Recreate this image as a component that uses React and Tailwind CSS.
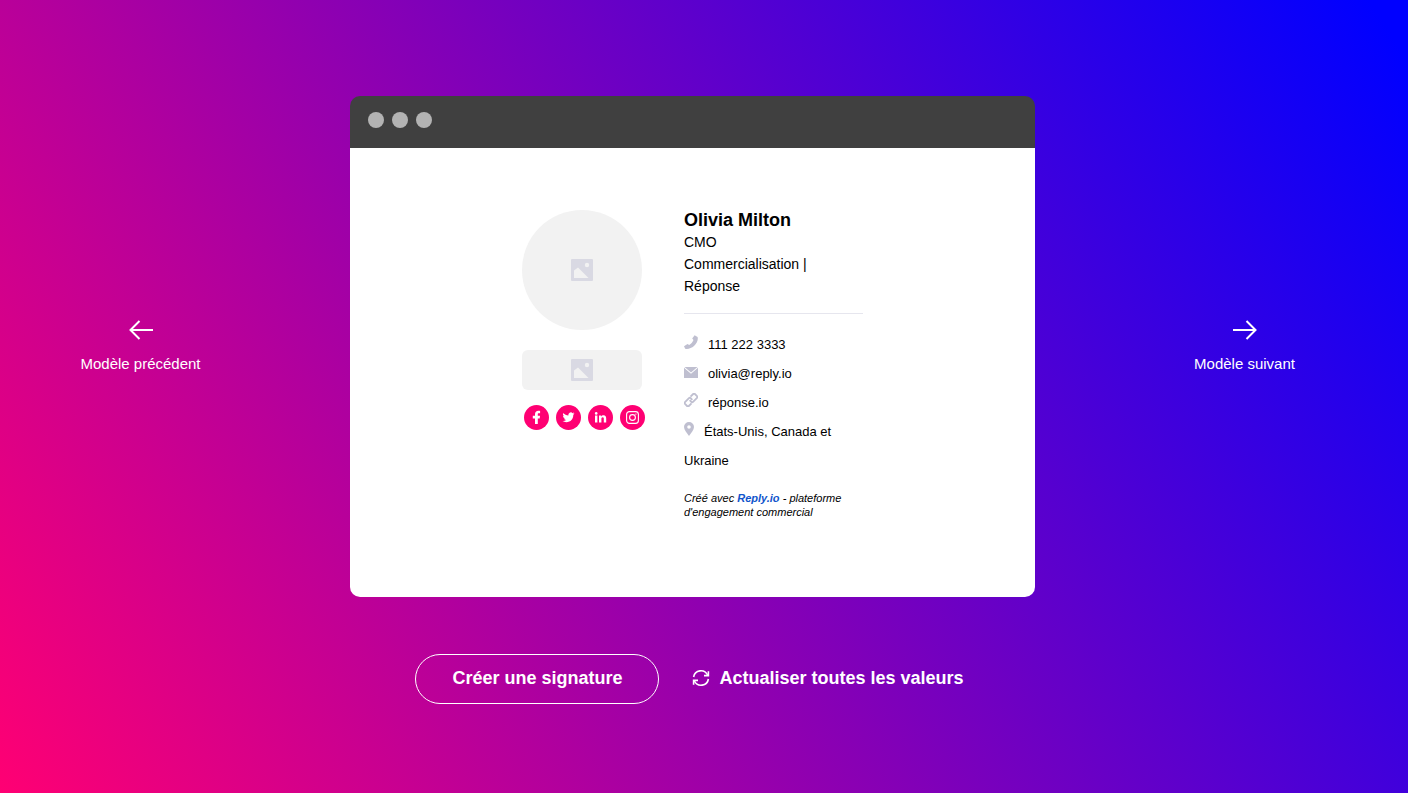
/**
 * Signature template picker
 * Preview window with previous / next navigation and actions
 */

function ImageIcon() {
  return (
    <svg width="22" height="22" viewBox="0 0 22 22" aria-hidden="true">
      <rect width="22" height="22" rx="1" fill="#d9d9e3" />
      <path d="M3 19V11.5L7 8.5L17.5 19Z" fill="#f2f2f2" />
      <circle cx="16" cy="6" r="2.2" fill="#f2f2f2" />
    </svg>
  );
}

function ArrowIcon({ flipped }) {
  return (
    <svg
      width="24"
      height="20"
      viewBox="0 0 24 20"
      fill="none"
      stroke="currentColor"
      strokeWidth="2"
      aria-hidden="true"
    >
      {flipped ? (
        <path d="M0 10H22.5M13.5 1L22.5 10L13.5 19" />
      ) : (
        <path d="M24 10H1.5M10.5 1L1.5 10L10.5 19" />
      )}
    </svg>
  );
}

function RefreshIcon() {
  return (
    <svg
      width="18"
      height="18"
      viewBox="0 0 18 18"
      fill="none"
      stroke="currentColor"
      strokeWidth="1.6"
      aria-hidden="true"
    >
      <path d="M1.6 8A7.4 7.4 0 0 1 15.6 6M16.4 10A7.4 7.4 0 0 1 2.4 12" />
      <path d="M16.4 2.2V6.6H12M1.6 15.8V11.4H6" />
    </svg>
  );
}

const contactIcons = {
  phone: (
    <svg className="mr-[10px] inline-block align-baseline" width="14" height="14" viewBox="0 0 14 14" fill="#bfbfd0" aria-hidden="true">
      <path d="M10.6 0.2L13.6 2C14.4 5 12.8 8.6 10 11C7.5 13.2 4 14.4 1.2 13.7L0 11.2L3.5 8.9L5.2 9.9C7 9 8.6 7.4 9.5 5.1L8.2 3.6Z" />
    </svg>
  ),
  mail: (
    <svg className="mr-[10px] inline-block align-baseline" width="14" height="12" viewBox="0 0 14 12" fill="#bfbfd0" aria-hidden="true">
      <path d="M0.5 1H13.5L7 6.4Z" />
      <path d="M0 1.8L7 7.7L14 1.8V12H0Z" />
    </svg>
  ),
  link: (
    <svg
      className="mr-[10px] inline-block align-baseline"
      width="14"
      height="14"
      viewBox="0 0 14 14"
      fill="none"
      stroke="#bfbfd0"
      strokeWidth="1.8"
      aria-hidden="true"
    >
      <g transform="translate(7 7) rotate(-45)">
        <path d="M-2 2.7H-5.8A1.2 1.2 0 0 1 -7 1.5V-1.5A1.2 1.2 0 0 1 -5.8 -2.7H-0.2A1.2 1.2 0 0 1 1 -1.5V0.9" />
        <path d="M2 -2.7H5.8A1.2 1.2 0 0 1 7 -1.5V1.5A1.2 1.2 0 0 1 5.8 2.7H0.2A1.2 1.2 0 0 1 -1 1.5V-0.9" />
      </g>
    </svg>
  ),
  pin: (
    <svg className="mr-[10px] inline-block align-baseline" width="10" height="14" viewBox="0 0 10 14" fill="#bfbfd0" aria-hidden="true">
      <path
        fillRule="evenodd"
        d="M5 0A5 5 0 0 1 10 5C10 8.2 7 10.8 5 14C3 10.8 0 8.2 0 5A5 5 0 0 1 5 0ZM5 3.2A1.8 1.8 0 1 0 5 6.8A1.8 1.8 0 1 0 5 3.2Z"
      />
    </svg>
  ),
};

const contacts = [
  { icon: 'phone', text: '111 222 3333' },
  { icon: 'mail', text: 'olivia@reply.io' },
  { icon: 'link', text: 'réponse.io' },
  { icon: 'pin', text: 'États-Unis, Canada et Ukraine' },
];

const socials = [
  {
    name: 'Facebook',
    shape: (
      <path
        fill="#fff"
        d="M11 19V13.4H8.8V10.8H11V9.2C11 7 12.3 5.8 14.4 5.8C15.2 5.8 15.9 5.9 16.1 5.9V8.2H14.9C13.9 8.2 13.8 8.6 13.8 9.3V10.8H16L15.7 13.4H13.8V19Z"
      />
    ),
  },
  {
    name: 'Twitter',
    shape: (
      <path
        fill="#fff"
        transform="translate(6.5 6.3) scale(0.5)"
        d="M23.95 4.57a10 10 0 0 1-2.82.77 4.96 4.96 0 0 0 2.16-2.72c-.95.56-2 .96-3.13 1.18a4.92 4.92 0 0 0-8.38 4.48C7.69 8.1 4.07 6.13 1.64 3.16a4.92 4.92 0 0 0 1.52 6.57 4.9 4.9 0 0 1-2.23-.61v.06a4.92 4.92 0 0 0 3.95 4.83 5 5 0 0 1-2.21.08 4.94 4.94 0 0 0 4.6 3.42A9.87 9.87 0 0 1 0 19.54a13.99 13.99 0 0 0 7.55 2.21c9.05 0 14-7.5 14-13.98 0-.21 0-.42-.02-.63a9.94 9.94 0 0 0 2.46-2.55z"
      />
    ),
  },
  {
    name: 'LinkedIn',
    shape: (
      <g fill="#fff">
        <circle cx="8.2" cy="8.4" r="1.3" />
        <path d="M7 10.4H9.4V17.6H7ZM11 10.4H13.2V11.4C13.6 10.7 14.5 10.2 15.5 10.2C17.6 10.2 18.2 11.6 18.2 13.5V17.6H15.8V14C15.8 13 15.7 12.2 14.7 12.2C13.7 12.2 13.4 13 13.4 14V17.6H11Z" />
      </g>
    ),
  },
  {
    name: 'Instagram',
    shape: (
      <g fill="none" stroke="#fff" strokeWidth="1.1">
        <rect x="6.6" y="6.6" width="11.8" height="11.8" rx="2.8" />
        <circle cx="12.5" cy="12.5" r="2.9" />
        <circle cx="15.9" cy="9.1" r="0.7" fill="#fff" stroke="none" />
      </g>
    ),
  },
];

function Signature() {
  return (
    <div className="flex justify-center gap-[42px] rounded-b-[10px] bg-white px-6 pt-[61px] pb-[78px]">
      <div className="w-[120px] shrink-0 pt-px">
        <div className="flex h-[120px] items-center justify-center rounded-full bg-[#f2f2f2]">
          <ImageIcon />
        </div>
        <div className="mt-5 flex h-10 items-center justify-center rounded-md bg-[#f2f2f2]">
          <ImageIcon />
        </div>
        <div className="mt-[15px] flex gap-[7px] pl-[2px]">
          {socials.map((social) => (
            <a key={social.name} href="#" aria-label={social.name} className="shrink-0">
              <svg className="block" width="25" height="25" viewBox="0 0 25 25">
                <circle cx="12.5" cy="12.5" r="12.5" fill="#ff0073" />
                {social.shape}
              </svg>
            </a>
          ))}
        </div>
      </div>

      <div className="w-[179px] text-black">
        <h2 className="text-[18px] leading-[22px] font-bold">Olivia Milton</h2>
        <p className="text-[14px] leading-[22px]">CMO</p>
        <p className="text-[14px] leading-[22px]">Commercialisation | Réponse</p>
        <hr className="mt-4 mb-4 border-[#e6e6ee]" />
        <ul className="text-[13px] leading-[29px]">
          {contacts.map((contact) => (
            <li key={contact.icon}>
              {contactIcons[contact.icon]}
              {contact.text}
            </li>
          ))}
        </ul>
        <p className="mt-4 text-[11px] leading-[14px] italic">
          Créé avec{' '}
          <a href="#" className="font-bold text-[#1155cc]">
            Reply.io
          </a>{' '}
          - plateforme d'engagement commercial
        </p>
      </div>
    </div>
  );
}

function NavButton({ label, flipped }) {
  return (
    <button
      type="button"
      className="flex w-[121px] cursor-pointer flex-col items-center gap-[14px] text-[15px] leading-5 whitespace-nowrap"
    >
      <ArrowIcon flipped={flipped} />
      {label}
    </button>
  );
}

export default function App() {
  return (
    <main className="min-h-screen bg-[linear-gradient(57deg,#ff0073,#0000ff_98%)] pt-24 pr-[23px] pb-[89px] font-['Liberation_Sans',Arial,sans-serif] text-white">
      <div className="flex items-center justify-between px-20">
        <NavButton label="Modèle précédent" />

        {/* Preview window */}
        <section className="w-[685px]">
          <div className="flex h-[52px] gap-2 rounded-t-[10px] bg-[#404040] px-[18px] pt-4">
            <span className="h-4 w-4 rounded-full bg-[#b3b3b3]" />
            <span className="h-4 w-4 rounded-full bg-[#b3b3b3]" />
            <span className="h-4 w-4 rounded-full bg-[#b3b3b3]" />
          </div>
          <Signature />
        </section>

        <NavButton label="Modèle suivant" flipped />
      </div>

      {/* Actions */}
      <div className="mt-[57px] flex items-center justify-center gap-[27px] text-[18px] leading-6 font-bold">
        <button type="button" className="h-[50px] cursor-pointer rounded-full border border-white px-9 pb-[2px]">
          Créer une signature
        </button>
        <button type="button" className="flex h-[50px] cursor-pointer items-center gap-[9px] px-[6px] pb-[2px]">
          <RefreshIcon />
          Actualiser toutes les valeurs
        </button>
      </div>
    </main>
  );
}
